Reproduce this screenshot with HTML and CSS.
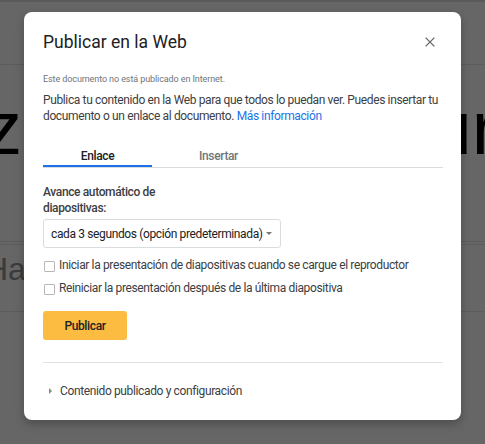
FILE: index.html
```html
<!DOCTYPE html>
<html lang="es">
<head>
<meta charset="utf-8">
<title>Publicar en la Web</title>
<link rel="stylesheet" href="styles.css">
</head>
<body>
<div class="page">
  <div class="bar"></div>
  <div class="hero"><span class="hero-left">z</span><span class="hero-right">ur</span></div>
  <div class="sub"><span class="sub-left">Ha</span></div>
</div>

<div class="dialog" role="dialog">
  <div class="dlg-head">
    <h1 class="dlg-title">Publicar en la Web</h1>
    <span class="close" aria-label="Cerrar">
      <svg width="10" height="10" viewBox="0 0 10 10"><path d="M0.6 0.6L9.4 9.4M9.4 0.6L0.6 9.4" stroke="#666" stroke-width="1.3" fill="none"/></svg>
    </span>
  </div>
  <p class="status">Este documento no está publicado en Internet.</p>
  <p class="intro">Publica tu contenido en la Web para que todos lo puedan ver. Puedes insertar tu documento o un enlace al documento. <a class="link" href="#">Más información</a></p>

  <div class="tabs">
    <div class="tab active">Enlace</div>
    <div class="tab">Insertar</div>
  </div>

  <div class="field-label">Avance automático de diapositivas:</div>
  <div class="select">
    <span class="select-text">cada 3 segundos (opción predeterminada)</span>
    <span class="caret"></span>
  </div>

  <label class="check"><span class="box"></span>Iniciar la presentación de diapositivas cuando se cargue el reproductor</label>
  <label class="check second"><span class="box"></span>Reiniciar la presentación después de la última diapositiva</label>

  <div class="btn">Publicar</div>

  <div class="divider"></div>

  <div class="footer-row"><span class="tri"></span>Contenido publicado y configuración</div>
</div>
</body>
</html>
```

FILE: styles.css
```css
* { box-sizing: border-box; }
html, body { margin: 0; padding: 0; }
body {
  width: 485px;
  height: 444px;
  overflow: hidden;
  position: relative;
  font-family: Roboto, "Liberation Sans", Arial, sans-serif;
  background: #666666;
}

/* dimmed document behind */
.page {
  height: 444px;
  background: #666666;
  border-top: 2px solid #5a5a5a;
  overflow: hidden;
}
.bar {
  height: 63px;
  border-bottom: 1px solid #5c5c5c;
}
.hero {
  height: 177px;
  display: flex;
  justify-content: space-between;
  align-items: flex-start;
  padding-top: 25px;
  font-family: "Liberation Sans", Arial, sans-serif;
  font-size: 76px;
  line-height: 76px;
  color: #000;
  border-bottom: 1px solid #5c5c5c;
  overflow: hidden;
}
.hero-left { margin-left: -16px; }
.hero-right { margin-right: -12px; }
.sub {
  margin-top: 2px;
  border-top: 1px solid #5c5c5c;
  height: 68px;
  border-bottom: 1px solid #5c5c5c;
  padding-top: 8px;
  font-family: "Liberation Sans", Arial, sans-serif;
  font-size: 32px;
  line-height: 32px;
  color: #3b3b3b;
  overflow: hidden;
}
.sub-left { display: inline-block; margin-left: -15px; }

/* dialog */
.dialog {
  position: absolute;
  left: 24px;
  top: 12px;
  width: 437px;
  height: 408px;
  background: #fff;
  border-radius: 8px;
  box-shadow: 0 4px 10px rgba(0,0,0,0.25);
  padding: 16px 18px 0 19px;
  color: #3c4043;
  font-size: 12px;
  letter-spacing: -0.37px;
}
.dlg-head {
  display: flex;
  justify-content: space-between;
  align-items: center;
  height: 28px;
}
.dlg-title {
  margin: 0;
  font-size: 17.5px;
  font-weight: 400;
  line-height: 28px;
  letter-spacing: 0;
  color: #202124;
}
.close {
  display: flex;
  width: 10px;
  height: 10px;
  margin-right: 8px;
  margin-top: -1px;
}
.status {
  margin: 16px 0 0;
  font-size: 9px;
  letter-spacing: -0.09px;
  line-height: 14px;
  color: #70757a;
}
.intro {
  margin: 6px 0 0;
  line-height: 16px;
  color: #3c4043;
}
.link { color: #1a73e8; text-decoration: none; }

.tabs {
  display: flex;
  gap: 12px;
  margin-top: 16px;
  border-bottom: 1px solid #dadce0;
}
.tab {
  width: 109px;
  height: 27px;
  padding-top: 8px;
  text-align: center;
  line-height: 16px;
  font-weight: 500;
  color: #70757a;
}
.tab.active {
  color: #202124;
  box-shadow: inset 0 -2px 0 #1a73e8;
}

.field-label {
  margin-top: 16px;
  width: 160px;
  line-height: 16px;
  font-weight: 500;
  color: #3c4043;
}
.select {
  margin-top: 3px;
  width: 238px;
  height: 29px;
  border: 1px solid #dadce0;
  border-radius: 3px;
  display: flex;
  align-items: center;
  justify-content: space-between;
  padding: 0 8px 0 7px;
  color: #202124;
}
.select-text { white-space: nowrap; }
.caret {
  width: 0;
  height: 0;
  border-left: 3px solid transparent;
  border-right: 3px solid transparent;
  border-top: 3px solid #777;
}

.check {
  margin-top: 9px;
  display: flex;
  align-items: center;
  gap: 4px;
  line-height: 16px;
  color: #3c4043;
  white-space: nowrap;
}
.check.second { margin-top: 7px; }
.box {
  width: 11px;
  height: 11px;
  margin-left: 1px;
  margin-top: 2px;
  border: 1px solid #b7b7b7;
  border-radius: 1px;
  flex: none;
}

.btn {
  margin-top: 15px;
  width: 84px;
  height: 29px;
  background: #fbbc41;
  border-radius: 3px;
  display: flex;
  align-items: center;
  justify-content: center;
  font-weight: 500;
  color: #202124;
}

.divider {
  margin-top: 22px;
  height: 1px;
  background: #e2e2e2;
}

.footer-row {
  margin-top: 20px;
  display: flex;
  align-items: center;
  line-height: 16px;
  color: #3c4043;
}
.tri {
  width: 0;
  height: 0;
  border-top: 3px solid transparent;
  border-bottom: 3px solid transparent;
  border-left: 3px solid #888;
  margin-left: 6px;
  margin-right: 8px;
}
```
